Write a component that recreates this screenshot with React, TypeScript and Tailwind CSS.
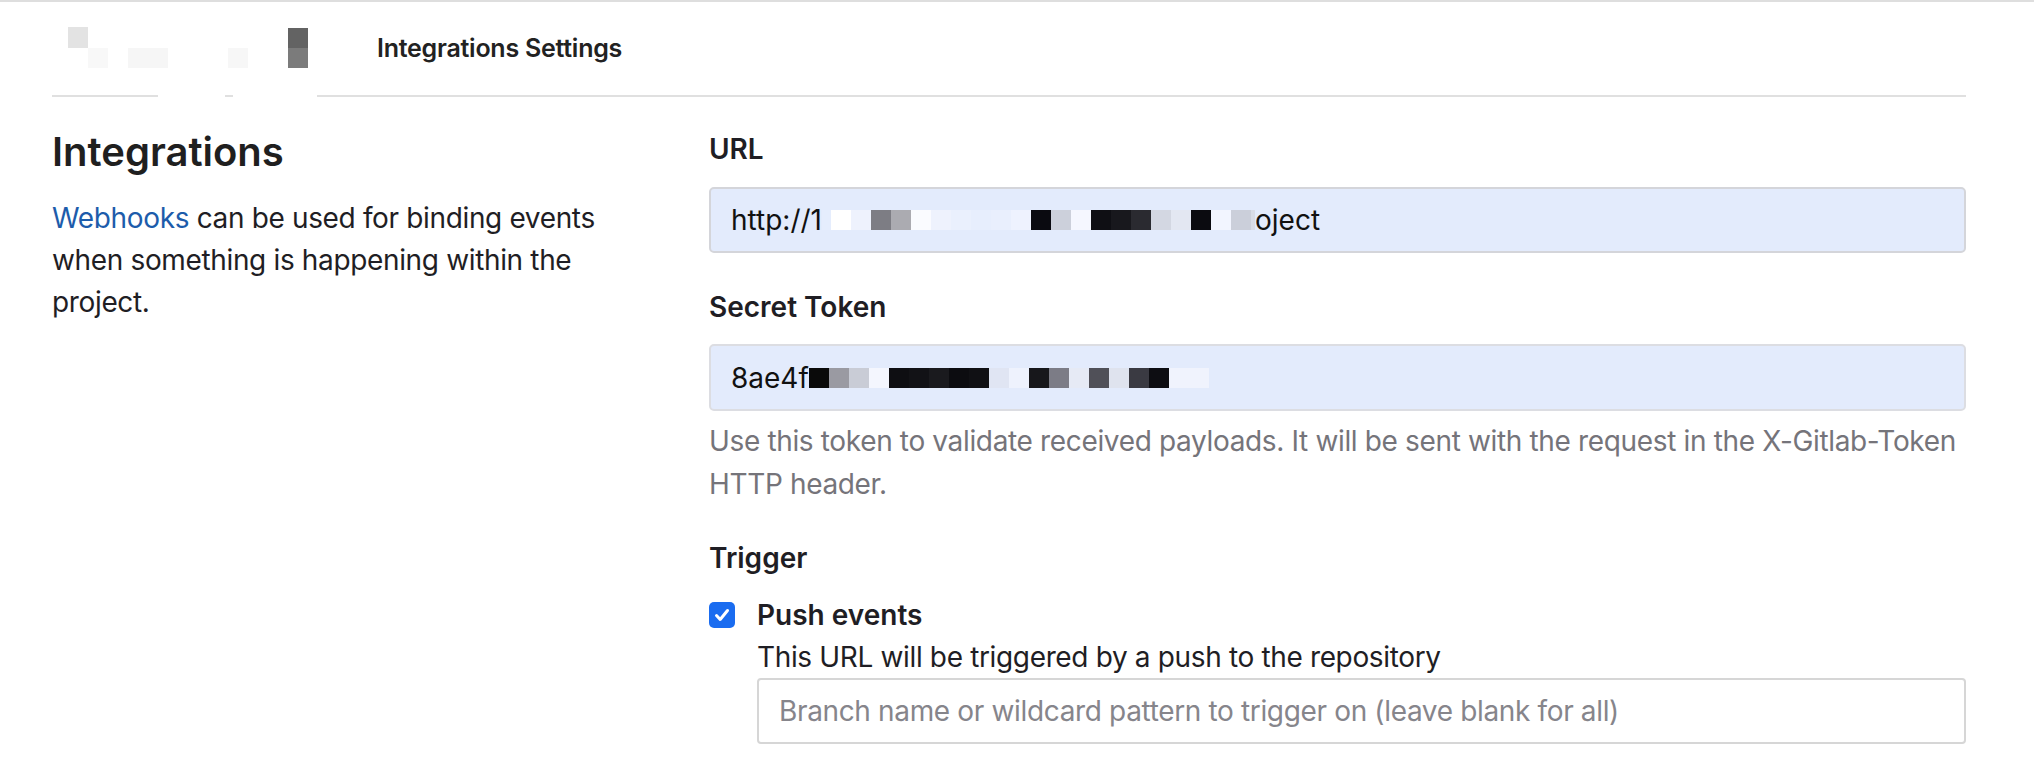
import React from "react";

const font = { fontFamily: "Inter, 'Noto Sans', sans-serif" } as React.CSSProperties;

type Cell = [number, string];

// redaction mosaic cells: [width, colour]
const urlCells: Cell[] = [
  [9, "#e5edfd"], [20, "#ffffff"], [20, "#eef2fd"], [20, "#7d7d84"], [20, "#ababb1"],
  [20, "#fafbff"], [20, "#eef2fd"], [20, "#eaf0fd"], [20, "#e7eefd"], [20, "#e9effd"],
  [20, "#eef2fe"], [20, "#0a0a10"], [20, "#ccd0db"], [20, "#f5f7ff"], [20, "#0f0f14"],
  [20, "#18181d"], [20, "#2a2a30"], [20, "#d3d7e2"], [20, "#e3e7f2"], [20, "#0b0b10"],
  [20, "#f2f5ff"], [20, "#cbcfda"], [4, "#d8dce6"],
];

const tokenCells: Cell[] = [
  [20, "#0a0a0a"], [20, "#9a9aa2"], [20, "#c9ccd6"], [20, "#f4f6fe"], [20, "#0e0e12"],
  [20, "#121216"], [20, "#1a1a1e"], [20, "#0c0c10"], [20, "#101014"], [20, "#e0e5f3"],
  [20, "#eef2fd"], [20, "#17171b"], [20, "#7c7c86"], [20, "#e6eaf5"], [20, "#505058"],
  [20, "#dfe3ee"], [20, "#3a3a42"], [20, "#0d0d12"], [40, "#f0f3fd"],
];

function Mosaic({ cells }: { cells: Cell[] }) {
  return (
    <span className="inline-flex h-[20px]">
      {cells.map(([w, c], i) => (
        <span key={i} className="h-full" style={{ width: w, background: c }} />
      ))}
    </span>
  );
}

function Label({ children }: { children: React.ReactNode }) {
  return <div className="text-[28px] leading-[42px] font-semibold text-[#1f1e24]">{children}</div>;
}

export default function App() {
  return (
    <div className="min-h-[758px] bg-white border-t-2 border-[#dedede] text-[#1f1e24]" style={font}>
      <div className="pl-[52px] pr-[68px]">
        {/* top bar */}
        <header className="relative flex items-center h-[95px] border-b-2 border-[#e0e0e0]">
          <div className="relative w-[325px] h-full shrink-0">
            <span className="absolute left-[16px] top-[25px] w-[20px] h-[21px] bg-[#e3e3e3]" />
            <span className="absolute left-[36px] top-[46px] w-[20px] h-[20px] bg-[#f8f8f8]" />
            <span className="absolute left-[76px] top-[46px] w-[40px] h-[20px] bg-[#f6f6f6]" />
            <span className="absolute left-[176px] top-[46px] w-[20px] h-[20px] bg-[#f7f7f7]" />
            <span className="absolute left-[236px] top-[26px] w-[20px] h-[20px] bg-[#636363]" />
            <span className="absolute left-[236px] top-[46px] w-[20px] h-[20px] bg-[#7b7b7b]" />
          </div>
          <span className="text-[25px] tracking-[-0.25px] font-semibold text-[#222]">Integrations Settings</span>
          <span className="absolute left-[106px] -bottom-[2px] w-[67px] h-[2px] bg-white" />
          <span className="absolute left-[181px] -bottom-[2px] w-[84px] h-[2px] bg-white" />
        </header>

        <main className="flex pt-[31px]">
          <div className="w-[657px] shrink-0">
            <h2 className="text-[40px] leading-[48px] font-semibold text-[#1f1f1f]">Integrations</h2>
            <p className="mt-[21px] w-[590px] text-[28px] leading-[42px] tracking-[-0.35px]">
              <a className="text-[#1d5cab]">Webhooks</a> can be used for binding events when something is
              happening within the project.
            </p>
          </div>

          <div className="flex-1">
            <Label>URL</Label>
            <div className="mt-[17px] h-[66px] flex items-center pl-[20px] rounded-[5px] border-2 border-[#d4d5da] bg-[#e3ebfc] text-[28px] text-[#111]">
              <span>http://1</span>
              <Mosaic cells={urlCells} />
              <span>oject</span>
            </div>

            <div className="mt-[33px]">
              <Label>Secret Token</Label>
            </div>
            <div className="mt-[16px] h-[67px] flex items-center pl-[20px] rounded-[5px] border-2 border-[#dcdde2] bg-[#e3ebfc] text-[28px] text-[#111]">
              <span>8ae4f</span>
              <Mosaic cells={tokenCells} />
            </div>
            <p className="mt-[9px] text-[28px] leading-[43px] tracking-[-0.35px] text-[#75747a]">
              Use this token to validate received payloads. It will be sent with the request in the{" "}
              <span className="whitespace-nowrap">X-Gitlab-Token</span> HTTP header.
            </p>

            <div className="mt-[31px]">
              <Label>Trigger</Label>
            </div>
            <div className="mt-[15px] flex items-center">
              <span className="w-[26px] h-[26px] rounded-[5px] bg-[#1a6cf0] flex items-center justify-center">
                <svg width="18" height="18" viewBox="0 0 18 18" fill="none">
                  <path d="M3.5 9.5 L7.2 13.5 L14.5 4.5" stroke="white" strokeWidth="3" strokeLinecap="round" strokeLinejoin="round" />
                </svg>
              </span>
              <span className="ml-[22px] text-[28px] leading-[42px] font-semibold">Push events</span>
            </div>
            <div className="ml-[48px]">
              <div className="text-[28px] leading-[42px] tracking-[-0.35px]">This URL will be triggered by a push to the repository</div>
              <input
                className="w-full h-[66px] pl-[20px] rounded-[4px] border-2 border-[#d6d6d6] bg-white text-[28px] tracking-[-0.35px] outline-none placeholder:text-[#86858b]"
                placeholder="Branch name or wildcard pattern to trigger on (leave blank for all)"
              />
            </div>
          </div>
        </main>
      </div>
    </div>
  );
}
